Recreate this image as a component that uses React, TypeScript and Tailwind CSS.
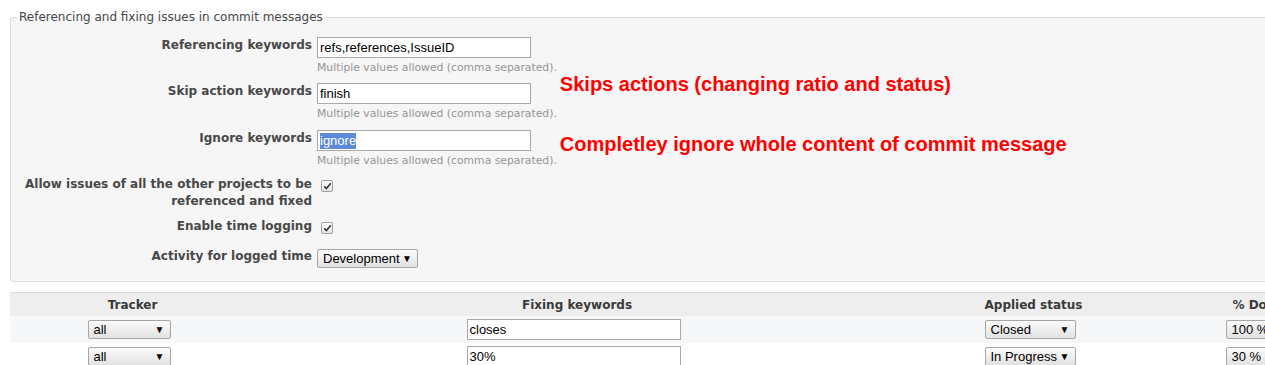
const verdana = "font-['DejaVu_Sans',Verdana,sans-serif]";
const arial = "font-['Liberation_Sans',Arial,sans-serif]";

function TextInput({ value, selected = false, width = "w-[214px]" }: { value: string; selected?: boolean; width?: string }) {
  return (
    <div className={`${width} ${arial} flex h-[21px] items-center border border-[#a9a9a9] bg-white pl-[2px] text-[13px] text-black`}>
      {selected ? <span className="bg-[#5c8ad8] leading-[16px] text-white">{value}</span> : value}
    </div>
  );
}

function Select({ value, width }: { value: string; width: string }) {
  return (
    <div
      className={`${width} ${arial} flex h-[19px] items-center justify-between rounded-[2px] border border-[#a6a6a6] bg-gradient-to-b from-[#fbfbfb] to-[#e2e2e2] pl-[5px] pr-[5px] text-[13px] text-black`}
    >
      <span>{value}</span>
      <span className="text-[10px]">▼</span>
    </div>
  );
}

function Checkbox() {
  return (
    <span className="mt-[4px] ml-[4px] flex h-[12px] w-[12px] items-center justify-center rounded-[2px] border border-[#a0a0a0] bg-gradient-to-b from-white to-[#e4e4e4]">
      <svg width="9" height="8" viewBox="0 0 9 8">
        <path d="M1.2 4.4 L3.4 6.6 L7.8 1.2" fill="none" stroke="#3a3a3a" strokeWidth="1.7" />
      </svg>
    </span>
  );
}

function Label({ children }: { children: React.ReactNode }) {
  return <div className={`${verdana} w-[301px] shrink-0 text-right text-[12px] font-bold leading-[17px] text-[#484848]`}>{children}</div>;
}

function Hint() {
  return (
    <div className={`${verdana} mt-[3px] text-[10.8px] leading-[14px] text-[#959595]`}>Multiple values allowed (comma separated).</div>
  );
}

function Note({ children }: { children: React.ReactNode }) {
  return <div className={`${arial} ml-[3px] -mt-[10px] text-[20px] font-bold leading-[22px] text-[#ff0000]`}>{children}</div>;
}

export default function App() {
  return (
    <div className="h-[365px] w-[1265px] overflow-hidden bg-white">
      <fieldset className="mt-[10px] ml-[10px] w-[1300px] rounded-[3px] border border-[#dcdcdc] bg-[#f6f6f6] pt-[13px] pb-[13px]">
        <legend className={`${verdana} ml-[6px] px-[2px] text-[12px] leading-[14px] text-[#484848]`}>
          Referencing and fixing issues in commit messages
        </legend>

        <div className="flex items-start">
          <Label>Referencing keywords</Label>
          <div className="ml-[5px]">
            <TextInput value="refs,references,IssueID" />
            <Hint />
          </div>
        </div>

        <div className="mt-[8px] flex items-start">
          <Label>Skip action keywords</Label>
          <div className="ml-[5px]">
            <TextInput value="finish" />
            <Hint />
          </div>
          <Note>Skips actions (changing ratio and status)</Note>
        </div>

        <div className="mt-[9px] flex items-start">
          <Label>Ignore keywords</Label>
          <div className="ml-[5px]">
            <TextInput value="ignore" selected />
            <Hint />
          </div>
          <Note>
            <span className="relative top-[13px]">Completley ignore whole content of commit message</span>
          </Note>
        </div>

        <div className="mt-[8px] flex items-start">
          <Label>
            Allow issues of all the other projects to be referenced and fixed
          </Label>
          <div className="ml-[5px]">
            <Checkbox />
          </div>
        </div>

        <div className="mt-[8px] flex items-start">
          <Label>Enable time logging</Label>
          <div className="ml-[5px]">
            <Checkbox />
          </div>
        </div>

        <div className="mt-[13px] flex items-start">
          <Label>Activity for logged time</Label>
          <div className="ml-[5px] pt-[1px]">
            <Select value="Development" width="w-[101px]" />
          </div>
        </div>
      </fieldset>

      <div className="mt-[10px] ml-[10px] w-[1400px]">
        <div className={`${verdana} grid h-[24px] grid-cols-[245px_644px_269px_180px] items-center border-t border-[#dddddd] bg-[#eeeeee] text-center text-[12px] font-bold text-[#3a3a3a]`}>
          <div>Tracker</div>
          <div>Fixing keywords</div>
          <div>Applied status</div>
          <div>% Done</div>
        </div>
        <div className="grid h-[27px] grid-cols-[245px_644px_269px_180px] items-center bg-[#f6f7f8]">
          <div className="flex justify-center pr-[7px]">
            <Select value="all" width="w-[83px]" />
          </div>
          <div className="flex justify-center pr-[7px]">
            <TextInput value="closes" />
          </div>
          <div className="flex justify-center pr-[7px]">
            <Select value="Closed" width="w-[91px]" />
          </div>
          <div className="flex justify-center pr-[1px]">
            <Select value="100 %" width="w-[64px]" />
          </div>
        </div>
        <div className="grid h-[27px] grid-cols-[245px_644px_269px_180px] items-center bg-white">
          <div className="flex justify-center pr-[7px]">
            <Select value="all" width="w-[83px]" />
          </div>
          <div className="flex justify-center pr-[7px]">
            <TextInput value="30%" />
          </div>
          <div className="flex justify-center pr-[7px]">
            <Select value="In Progress" width="w-[91px]" />
          </div>
          <div className="flex justify-center pr-[1px]">
            <Select value="30 %" width="w-[64px]" />
          </div>
        </div>
      </div>
    </div>
  );
}
